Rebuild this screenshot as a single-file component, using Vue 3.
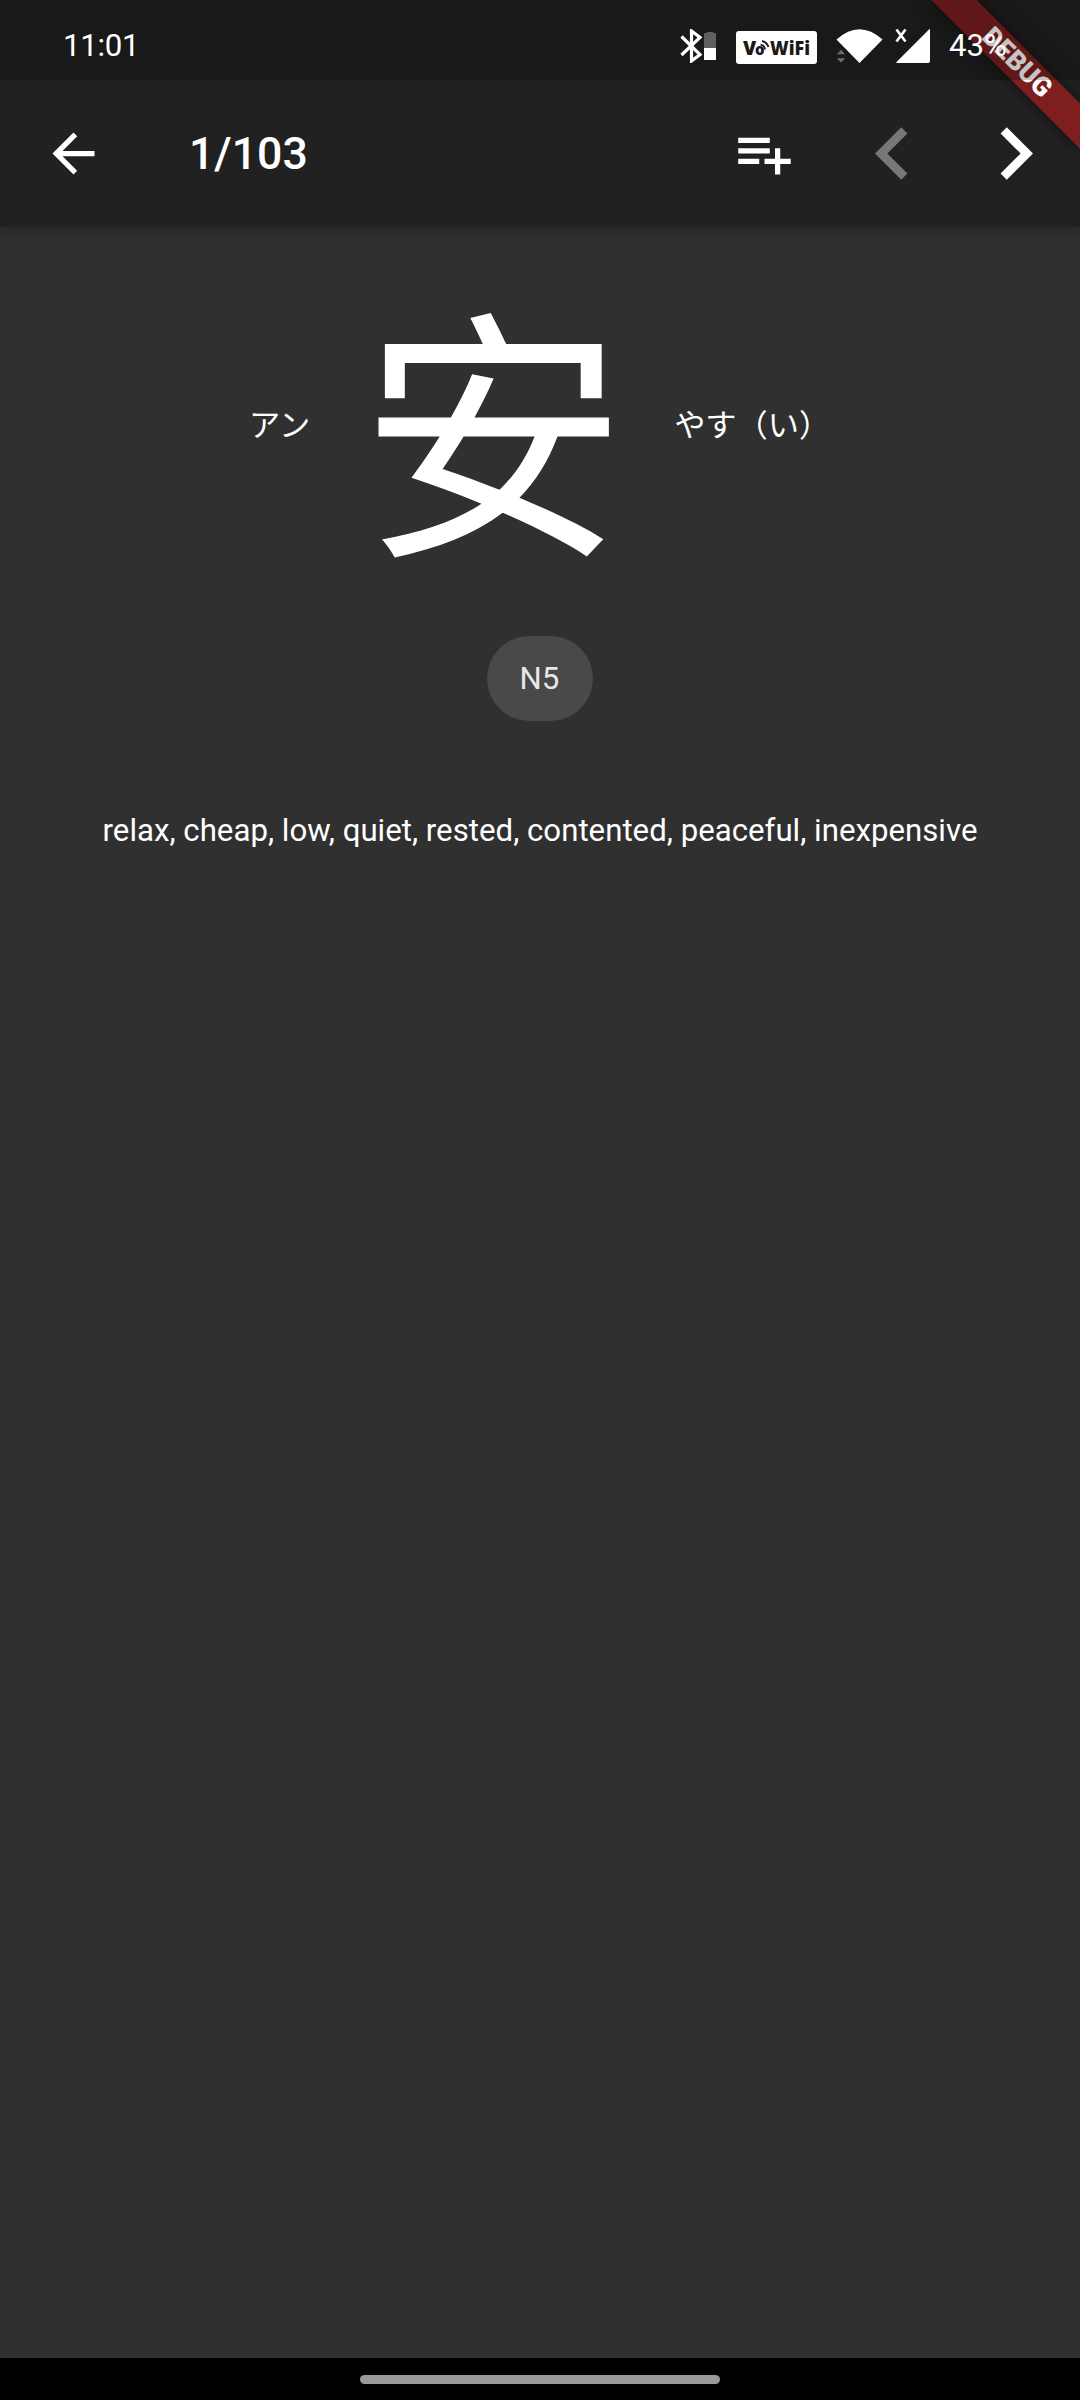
<script setup>
const position = '1/103'
const kanji = {
  character: '安',
  on: 'アン',
  kun: 'やす（い）',
  level: 'N5',
  meanings: ['relax', 'cheap', 'low', 'quiet', 'rested', 'contented', 'peaceful', 'inexpensive'],
}
</script>

<template>
  <div class="screen">
    <header class="top">
      <div class="status">
        <span class="time">11:01</span>
        <div class="indicators">
          <svg class="bluetooth" width="36" height="34" viewBox="0 0 36 34">
            <path d="M1.5 7.5 L20 25.5 L11.5 32 V2 L20 8.5 L1.5 26" fill="none" stroke="#fff" stroke-width="3.2" />
            <path d="M24 5 q0-1 1-1 h2 v-1 h6 v1 h2 q1 0 1 1 V19 H24z" fill="#606060" />
            <path d="M24 19h12v12H24z" fill="#fff" />
          </svg>
          <svg class="vowifi" width="81" height="33" viewBox="0 0 81 33">
            <rect width="81" height="33" rx="3" fill="#fff" />
            <g class="badge-text" fill="#1a1a1a">
              <text x="7" y="23.5" font-size="19">V</text>
              <text x="19" y="23.5" font-size="15">o</text>
              <text x="34" y="23.5" font-size="19" textLength="40" lengthAdjust="spacingAndGlyphs">WiFi</text>
            </g>
            <path d="M24.5 13.5 a6 6 0 0 1 4.5 5 M26 10 a9 9 0 0 1 6.5 6" fill="none" stroke="#1a1a1a" stroke-width="1.8" />
          </svg>
          <svg class="wifi" width="48" height="36" viewBox="0 0 48 36">
            <path d="M0.5 11.5 Q23.5 -9 46.5 11.5 L23.5 35z" fill="#fff" />
            <path d="M0.5 26.5 L5 21.5 L9.5 26.5z M0.5 30 H9.5 L5 35z" fill="#6e6e6e" stroke="#1a1a1a" stroke-width="0.5" />
          </svg>
          <svg class="signal" width="36" height="36" viewBox="0 0 36 36">
            <path d="M35 2 V33 q0 2-2 2 H2 q-1.5 0-.5-1 L34 1.5 q1-1 1 .5z" fill="#fff" />
            <path d="M1.5 1.5 L10.5 13.5 M10.5 1.5 L1.5 13.5" stroke="#fff" stroke-width="2.6" fill="none" />
          </svg>
          <span class="battery">43%</span>
        </div>
      </div>
      <div class="appbar">
        <svg class="back" width="63" height="63" viewBox="0 0 24 24">
          <path fill="#fff" d="M20 11H7.83l5.59-5.59L12 4l-8 8 8 8 1.41-1.41L7.83 13H20v-2z" />
        </svg>
        <h1>{{ position }}</h1>
        <svg class="add" width="63" height="63" viewBox="0 0 24 24">
          <path fill="#fff" d="M14 10H2v2h12v-2zm0-4H2v2h12V6zm4 8v-4h-2v4h-4v2h4v4h2v-4h4v-2h-4zM2 16h8v-2H2v2z" />
        </svg>
        <svg class="prev" width="105" height="105" viewBox="0 0 24 24">
          <path fill="#777" d="M15.41 7.41L14 6l-6 6 6 6 1.41-1.41L10.83 12z" />
        </svg>
        <svg class="next" width="105" height="105" viewBox="0 0 24 24">
          <path fill="#fff" d="M10 6L8.59 7.41 13.17 12l-4.58 4.59L10 18l6-6z" />
        </svg>
      </div>
    </header>

    <main>
      <div class="readings">
        <span>{{ kanji.on }}</span>
        <strong>{{ kanji.character }}</strong>
        <span>{{ kanji.kun }}</span>
      </div>
      <div class="chip">{{ kanji.level }}</div>
      <p class="meanings">{{ kanji.meanings.join(', ') }}</p>
    </main>

    <footer><i></i></footer>

    <div class="banner-clip"><div class="banner">DEBUG</div></div>
  </div>
</template>

<style>
body { margin: 0; background: #303030; }
</style>

<style scoped>
.screen {
  position: relative;
  display: flex;
  flex-direction: column;
  width: 1080px;
  height: 2400px;
  overflow: hidden;
  background: #303030;
  color: #fff;
  font-family: Roboto, "Noto Sans CJK JP", sans-serif;
  font-size: 31.2px;
}
.top {
  background: #212121;
  box-shadow: 0 5px 12px rgba(0, 0, 0, .2);
}
.status {
  position: relative;
  z-index: 2;
  display: flex;
  justify-content: space-between;
  box-sizing: border-box;
  height: 80px;
  padding: 0 74px 0 63px;
  background: rgba(0, 0, 0, .23);
}
.time, .battery { line-height: 36px; margin-top: 28px; }
.time { letter-spacing: -.3px; }
.indicators { display: flex; align-items: flex-start; }
.bluetooth { margin-top: 29px; }
.vowifi { margin: 31px 0 0 20px; }
.badge-text { font-family: "Open Sans", sans-serif; font-weight: 800; }
.wifi { margin: 28px 0 0 19px; }
.signal { margin: 28px 0 0 11px; }
.battery { width: 57px; margin-left: 18px; white-space: nowrap; }
.appbar {
  display: flex;
  align-items: center;
  height: 147px;
  padding-left: 42px;
}
.appbar h1 {
  margin: 0 0 0 84px;
  width: 544px;
  font-size: 44.6px;
  font-weight: 500;
  line-height: 52px;
}
.prev { margin-left: 44px; }
.next { margin-left: 18px; }
main {
  flex: 1;
  display: flex;
  flex-direction: column;
  align-items: center;
}
.readings {
  display: flex;
  align-items: center;
  align-self: flex-start;
  height: 304px;
  margin: 47px 0 0 249px;
  line-height: 46px;
}
.readings strong {
  width: 266px;
  margin: 0 48px 0 50px;
  padding-bottom: 11px;
  font-family: "Noto Sans CJK SC", sans-serif;
  font-size: 266px;
  font-weight: 400;
  line-height: 304px;
}
.chip {
  display: flex;
  align-items: center;
  justify-content: center;
  box-sizing: border-box;
  width: 106px;
  height: 85px;
  margin-top: 58px;
  padding-right: 1px;
  border-radius: 43px;
  background: #494949;
  color: #e7e7e7;
}
.meanings { margin: 91px 0 0; line-height: 37px; white-space: nowrap; letter-spacing: .01px; }
footer {
  display: flex;
  justify-content: center;
  height: 42px;
  background: #000;
}
footer i {
  width: 360px;
  height: 9px;
  margin-top: 17px;
  border-radius: 5px;
  background: #999;
}
.banner-clip {
  position: absolute;
  z-index: 1;
  top: 0;
  right: 0;
  width: 240px;
  height: 240px;
  overflow: hidden;
  pointer-events: none;
}
.banner {
  position: absolute;
  top: 47px;
  right: -42px;
  width: 210px;
  height: 31.5px;
  transform: rotate(45deg);
  background: rgba(183, 28, 28, .627);
  box-shadow: 0 0 16px rgba(0, 0, 0, .5);
  font-size: 26.8px;
  font-weight: 900;
  line-height: 31.5px;
  text-align: center;
}
</style>
